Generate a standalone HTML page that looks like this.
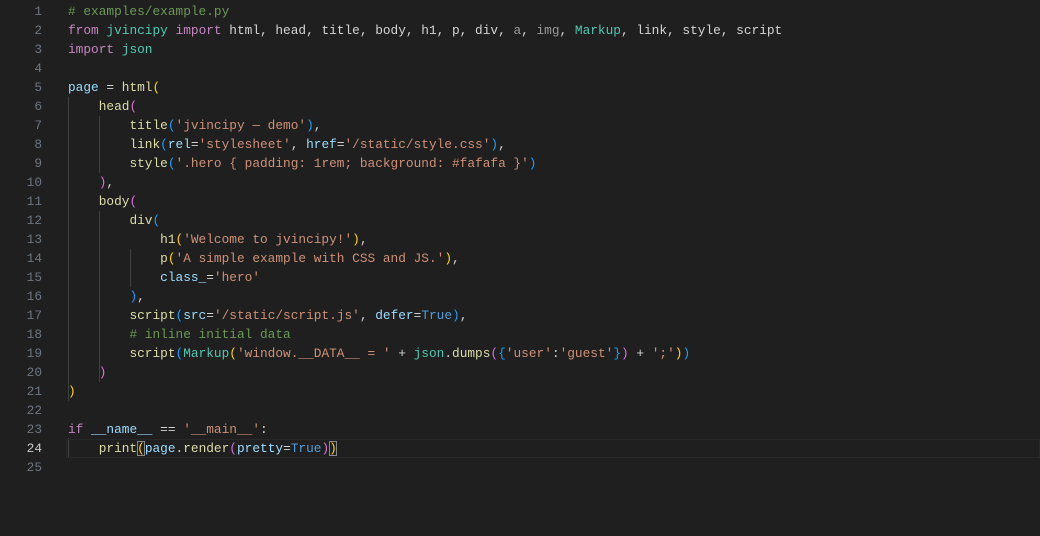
<!DOCTYPE html>
<html><head><style>
html,body{margin:0;padding:0;background:#1f1f1f;width:1040px;height:536px;overflow:hidden}
.ed{position:relative;font-family:"Liberation Mono",monospace;font-size:12.8px;}
.l{position:absolute;left:0;height:19px;line-height:19px;white-space:pre;width:1040px}
.n{position:absolute;left:0;width:42px;text-align:right;color:#6e7681}
.c{position:absolute;left:68px;color:#d4d4d4}
.cur{position:absolute;left:66px;right:0;top:0;height:17px;border:1px solid #282828}
.g{position:absolute;width:1px;background:#404040}
.cm{color:#6a9955}.k{color:#c586c0}.m{color:#4ec9b0}.f{color:#dcdcaa}.v{color:#9cdcfe}.s{color:#ce9178}.b{color:#569cd6}
.y{color:#ffd700}.p{color:#da70d6}.u{color:#179fff}
.bx{outline:1px solid #888;outline-offset:-1px}
</style></head><body><div class="ed">
<div class="g" style="left:68px;top:97px;height:304px"></div>
<div class="g" style="left:99px;top:116px;height:57px"></div>
<div class="g" style="left:99px;top:211px;height:171px"></div>
<div class="g" style="left:130px;top:249px;height:38px"></div>
<div class="g" style="left:68px;top:438px;height:19px"></div>
<div class="l" style="top:2px"><span class="n">1</span><span class="c"><span class="cm"># examples/example.py</span></span></div>
<div class="l" style="top:21px"><span class="n">2</span><span class="c"><span class="k">from</span> <span class="m">jvincipy</span> <span class="k">import</span> html, head, title, body, h1, p, div, <span style="color:#999">a</span>, <span style="color:#999">img</span>, <span class="m">Markup</span>, link, style, script</span></div>
<div class="l" style="top:40px"><span class="n">3</span><span class="c"><span class="k">import</span> <span class="m">json</span></span></div>
<div class="l" style="top:59px"><span class="n">4</span></div>
<div class="l" style="top:78px"><span class="n">5</span><span class="c"><span class="v">page</span> = <span class="f">html</span><span class="y">(</span></span></div>
<div class="l" style="top:97px"><span class="n">6</span><span class="c">    <span class="f">head</span><span class="p">(</span></span></div>
<div class="l" style="top:116px"><span class="n">7</span><span class="c">        <span class="f">title</span><span class="u">(</span><span class="s">'jvincipy — demo'</span><span class="u">)</span>,</span></div>
<div class="l" style="top:135px"><span class="n">8</span><span class="c">        <span class="f">link</span><span class="u">(</span><span class="v">rel</span>=<span class="s">'stylesheet'</span>, <span class="v">href</span>=<span class="s">'/static/style.css'</span><span class="u">)</span>,</span></div>
<div class="l" style="top:154px"><span class="n">9</span><span class="c">        <span class="f">style</span><span class="u">(</span><span class="s">'.hero { padding: 1rem; background: #fafafa }'</span><span class="u">)</span></span></div>
<div class="l" style="top:173px"><span class="n">10</span><span class="c">    <span class="p">)</span>,</span></div>
<div class="l" style="top:192px"><span class="n">11</span><span class="c">    <span class="f">body</span><span class="p">(</span></span></div>
<div class="l" style="top:211px"><span class="n">12</span><span class="c">        <span class="f">div</span><span class="u">(</span></span></div>
<div class="l" style="top:230px"><span class="n">13</span><span class="c">            <span class="f">h1</span><span class="y">(</span><span class="s">'Welcome to jvincipy!'</span><span class="y">)</span>,</span></div>
<div class="l" style="top:249px"><span class="n">14</span><span class="c">            <span class="f">p</span><span class="y">(</span><span class="s">'A simple example with CSS and JS.'</span><span class="y">)</span>,</span></div>
<div class="l" style="top:268px"><span class="n">15</span><span class="c">            <span class="v">class_</span>=<span class="s">'hero'</span></span></div>
<div class="l" style="top:287px"><span class="n">16</span><span class="c">        <span class="u">)</span>,</span></div>
<div class="l" style="top:306px"><span class="n">17</span><span class="c">        <span class="f">script</span><span class="u">(</span><span class="v">src</span>=<span class="s">'/static/script.js'</span>, <span class="v">defer</span>=<span class="b">True</span><span class="u">)</span>,</span></div>
<div class="l" style="top:325px"><span class="n">18</span><span class="c">        <span class="cm"># inline initial data</span></span></div>
<div class="l" style="top:344px"><span class="n">19</span><span class="c">        <span class="f">script</span><span class="u">(</span><span class="m">Markup</span><span class="y">(</span><span class="s">'window.__DATA__ = '</span> + <span class="m">json</span>.<span class="f">dumps</span><span class="p">(</span><span class="u">{</span><span class="s">'user'</span>:<span class="s">'guest'</span><span class="u">}</span><span class="p">)</span> + <span class="s">';'</span><span class="y">)</span><span class="u">)</span></span></div>
<div class="l" style="top:363px"><span class="n">20</span><span class="c">    <span class="p">)</span></span></div>
<div class="l" style="top:382px"><span class="n">21</span><span class="c"><span class="y">)</span></span></div>
<div class="l" style="top:401px"><span class="n">22</span></div>
<div class="l" style="top:420px"><span class="n">23</span><span class="c"><span class="k">if</span> <span class="v">__name__</span> == <span class="s">'__main__'</span>:</span></div>
<div class="l" style="top:439px"><span class="cur"></span><span class="n" style="color:#cccccc">24</span><span class="c">    <span class="f">print</span><span class="y bx">(</span><span class="v">page</span>.<span class="f">render</span><span class="p">(</span><span class="v">pretty</span>=<span class="b">True</span><span class="p">)</span><span class="y bx">)</span></span></div>
<div class="l" style="top:458px"><span class="n">25</span></div>
</div></body></html>
